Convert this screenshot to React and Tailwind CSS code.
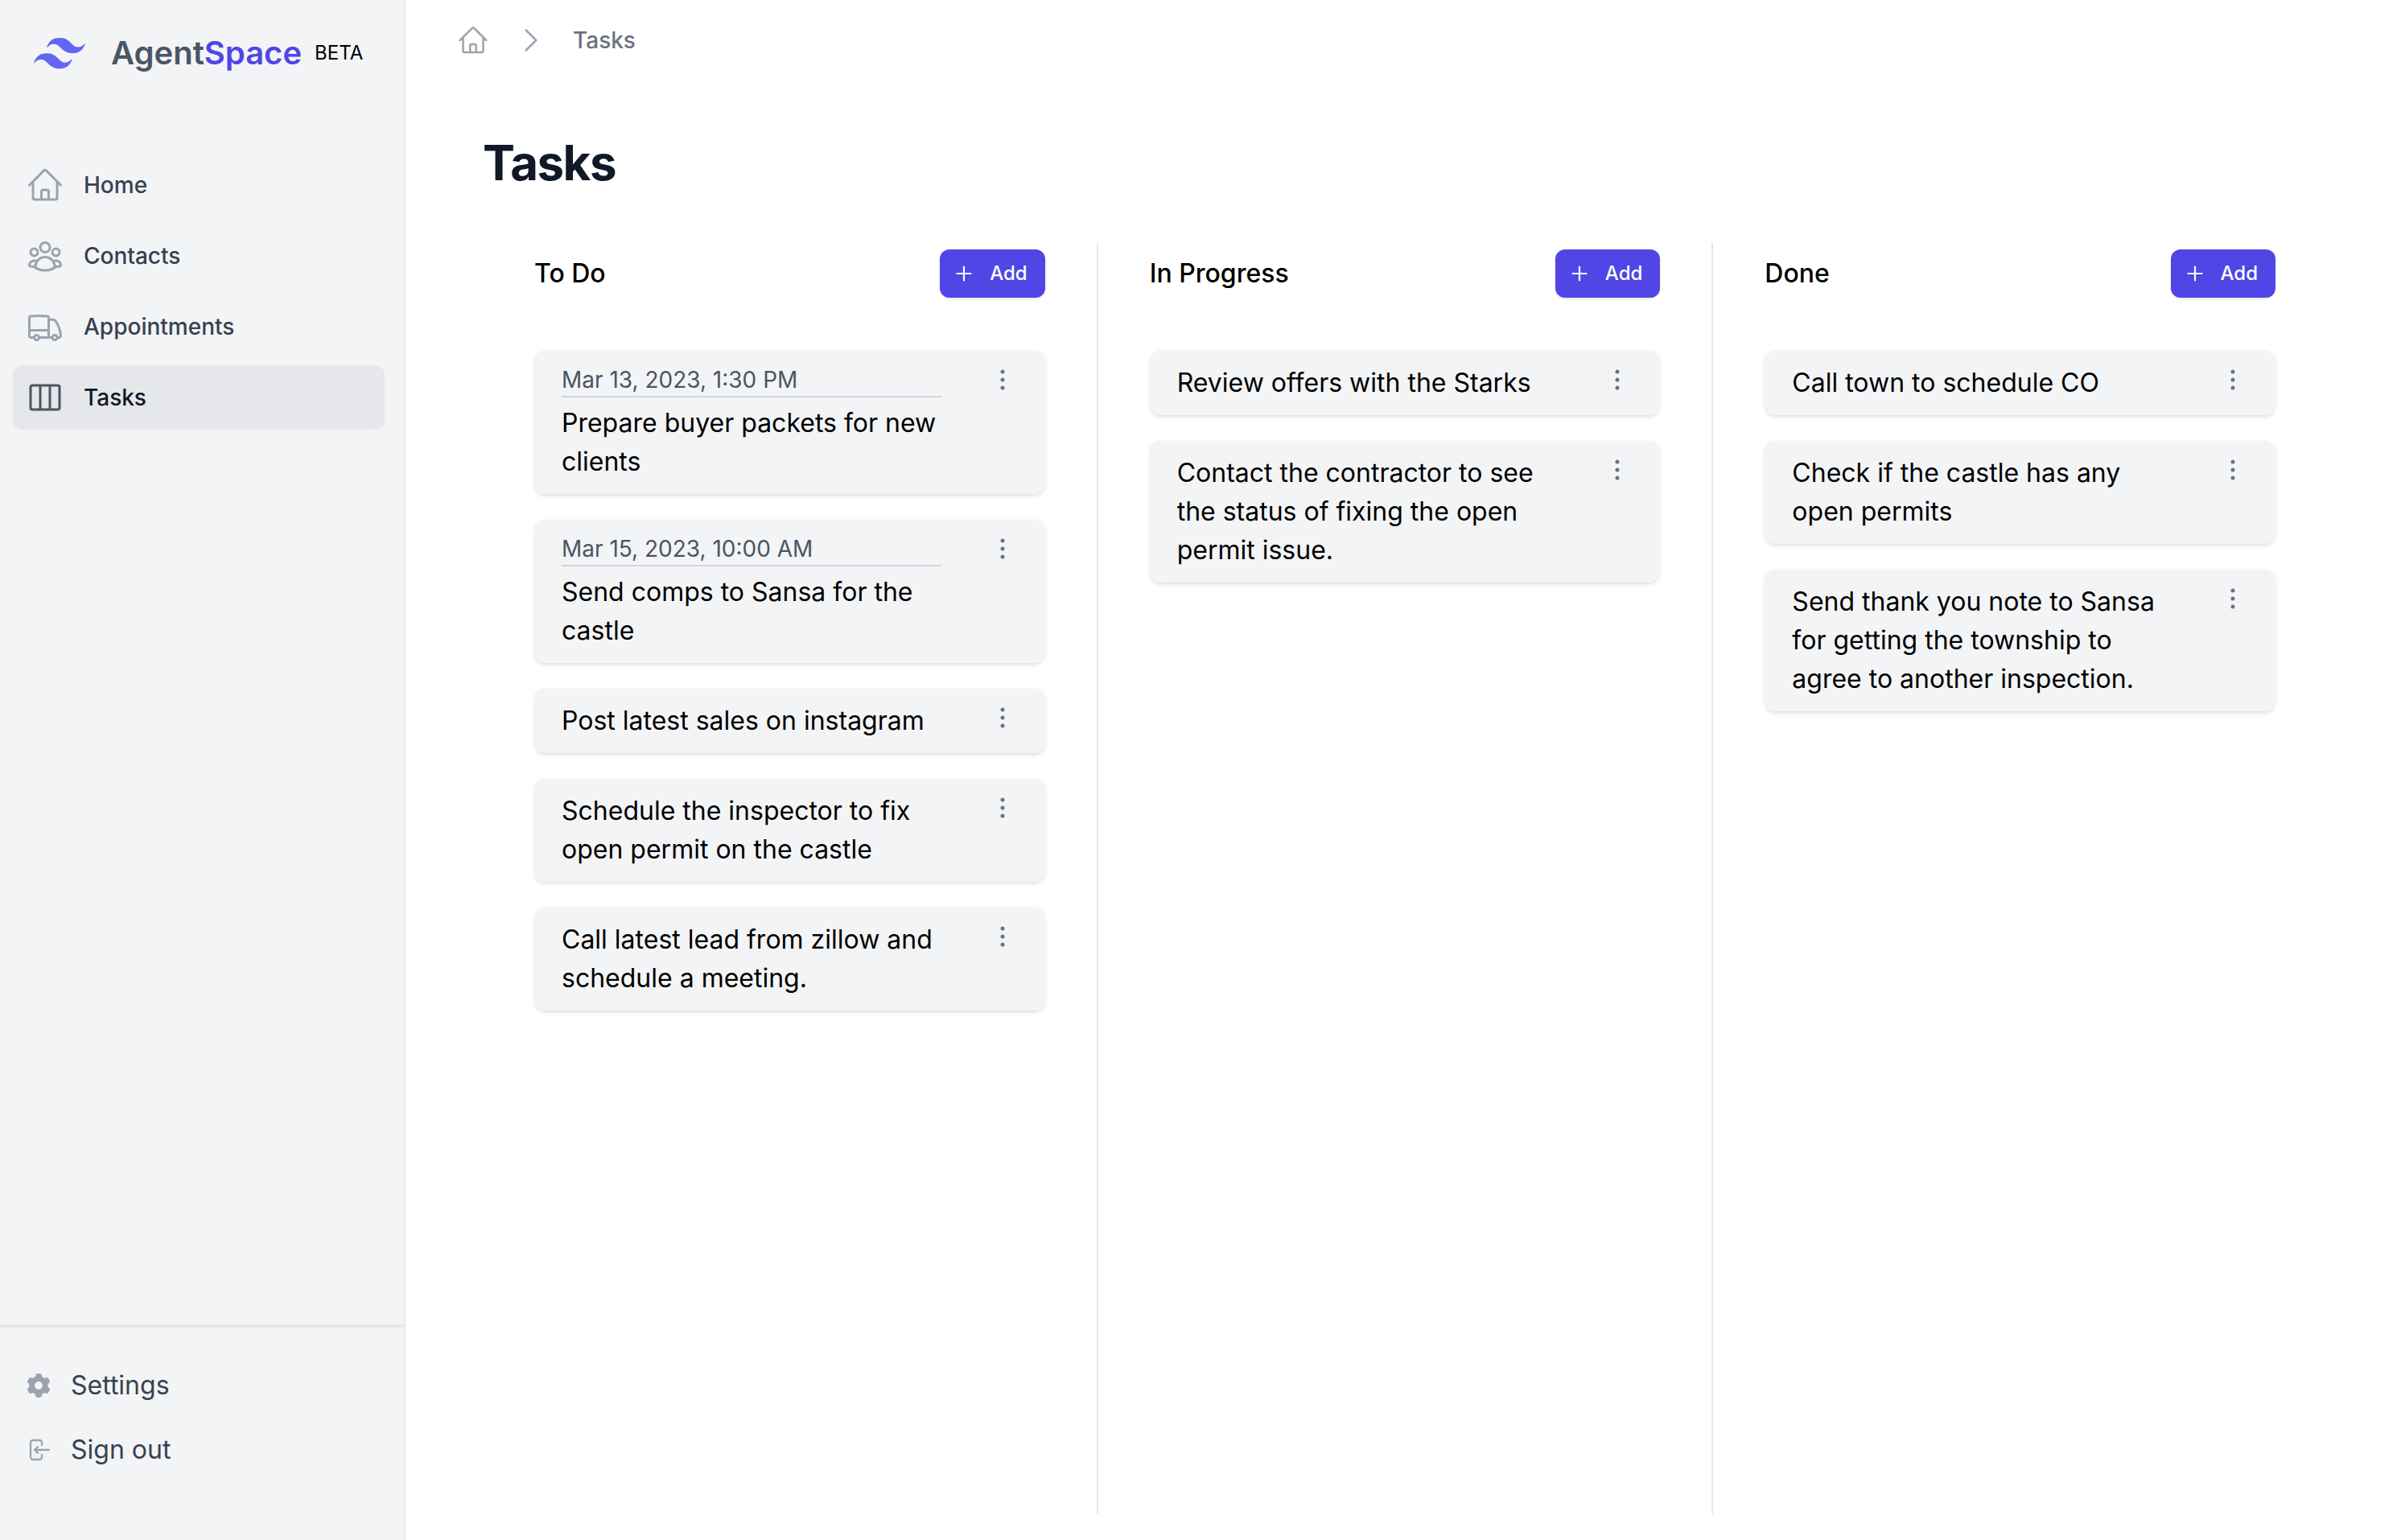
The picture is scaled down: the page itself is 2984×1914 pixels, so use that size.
import {
  HiOutlineHome,
  HiOutlineUserGroup,
  HiOutlineTruck,
  HiOutlineViewColumns,
  HiOutlineChevronRight,
} from "react-icons/hi2";

const NAV = [
  { name: "Home", icon: HiOutlineHome },
  { name: "Contacts", icon: HiOutlineUserGroup },
  { name: "Appointments", icon: HiOutlineTruck },
  { name: "Tasks", icon: HiOutlineViewColumns, current: true },
];

const COLUMNS = [
  {
    title: "To Do",
    tasks: [
      { date: "Mar 13, 2023, 1:30 PM", text: "Prepare buyer packets for new clients" },
      { date: "Mar 15, 2023, 10:00 AM", text: "Send comps to Sansa for the castle" },
      { text: "Post latest sales on instagram" },
      { text: "Schedule the inspector to fix open permit on the castle" },
      { text: "Call latest lead from zillow and schedule a meeting." },
    ],
  },
  {
    title: "In Progress",
    tasks: [
      { text: "Review offers with the Starks" },
      { text: "Contact the contractor to see the status of fixing the open permit issue." },
    ],
  },
  {
    title: "Done",
    tasks: [
      { text: "Call town to schedule CO" },
      { text: "Check if the castle has any open permits" },
      { text: "Send thank you note to Sansa for getting the township to agree to another inspection." },
    ],
  },
];

function Logo() {
  return (
    <svg className="h-16 w-16 shrink-0 text-[#6366f1]" viewBox="0 0 32 32" fill="currentColor" aria-hidden="true">
      <path d="M16 6.5c-4.27 0-6.93 2.13-8 6.4 1.6-2.13 3.47-2.93 5.6-2.4 1.22.3 2.09 1.19 3.05 2.17 1.57 1.59 3.38 3.43 7.35 3.43 4.27 0 6.93-2.13 8-6.4-1.6 2.13-3.47 2.93-5.6 2.4-1.22-.3-2.09-1.19-3.05-2.16C21.78 8.34 19.97 6.5 16 6.5zM8 16.1c-4.27 0-6.93 2.13-8 6.4 1.6-2.13 3.47-2.93 5.6-2.4 1.22.3 2.09 1.19 3.05 2.17 1.57 1.59 3.38 3.43 7.35 3.43 4.27 0 6.93-2.13 8-6.4-1.6 2.13-3.47 2.93-5.6 2.4-1.22-.3-2.09-1.19-3.05-2.17C13.78 17.94 11.97 16.1 8 16.1z" />
    </svg>
  );
}

const TEETH = [0, 60, 120, 180, 240, 300];

function GearIcon() {
  return (
    <svg className="h-8 w-8 shrink-0 text-[#9ca3af]" viewBox="0 0 32 32" fill="currentColor" aria-hidden="true">
      <circle cx="16" cy="16" r="8.3" fill="none" stroke="currentColor" strokeWidth="6.8" />
      {TEETH.map((angle) => (
        <rect key={angle} x="12.2" y="1.2" width="7.6" height="7" rx="2" transform={`rotate(${angle} 16 16)`} />
      ))}
    </svg>
  );
}

function SignOutIcon() {
  return (
    <svg className="h-8 w-8 shrink-0 text-[#9ca3af]" viewBox="0 0 32 32" fill="none" stroke="currentColor" strokeWidth="2.3" strokeLinecap="round" strokeLinejoin="round" aria-hidden="true">
      <path d="M20 10V7a3 3 0 0 0-3-3H9a3 3 0 0 0-3 3v18a3 3 0 0 0 3 3h8a3 3 0 0 0 3-3v-3M29 16H11M15 12.200l-4 3.800 4 3.800" />
    </svg>
  );
}

function TaskCard({ task }) {
  return (
    <li className="flex items-start justify-between rounded-xl bg-[#f3f4f6] py-4 pr-8 pl-[33px] shadow-[0_2px_6px_rgba(0,0,0,0.1),0_2px_4px_-2px_rgba(0,0,0,0.1)]">
      <div className="w-118 min-w-0">
        {task.date && (
          <p className="mb-2 border-b-2 border-[#d1d5db] text-[28px] leading-10 text-[#4b5563]">{task.date}</p>
        )}
        <p className="text-[32px] leading-12">{task.text}</p>
      </div>
      <button type="button" aria-label="Task options" className="flex h-10 w-10 shrink-0 items-center justify-center text-[#6b7280]">
        <svg className="h-10 w-10" viewBox="0 0 20 20" fill="currentColor" aria-hidden="true">
          <circle cx="10" cy="5" r="1.25" />
          <circle cx="10" cy="10" r="1.25" />
          <circle cx="10" cy="15" r="1.25" />
        </svg>
      </button>
    </li>
  );
}

function Column({ column }) {
  return (
    <section className="min-w-0 flex-1 px-16 pt-2">
      <header className="flex items-center justify-between">
        <h2 className="text-[32px] leading-12 font-medium">{column.title}</h2>
        <button type="button" className="flex h-15 items-center rounded-xl bg-[#4f46e5] pr-[22px] pl-4 text-[24px] leading-8 font-medium text-white shadow-sm">
          <svg className="mr-[18px] h-7 w-7" viewBox="0 0 28 28" fill="none" stroke="currentColor" strokeWidth="2.2" strokeLinecap="round" aria-hidden="true">
            <path d="M14 5.500v17M5.500 14h17" />
          </svg>
          Add
        </button>
      </header>
      <ul className="mt-[66px] flex flex-col gap-8 px-px">
        {column.tasks.map((task) => (
          <TaskCard key={task.text} task={task} />
        ))}
      </ul>
    </section>
  );
}

export default function App() {
  return (
    <div className="flex min-h-screen bg-white font-['Inter',sans-serif] text-black">
      <aside className="flex w-126 shrink-0 flex-col border-r-2 border-[#e5e7eb] bg-[#f3f4f6]">
        <div className="flex h-33 items-center pl-[42px]">
          <Logo />
          <p className="ml-8 text-[40px] leading-14 font-semibold text-[#4b5563]">
            Agent<span className="text-[#4f46e5]">Space</span>
          </p>
          <span className="ml-4 text-[24px] leading-8">BETA</span>
        </div>
        <nav className="mt-[58px] flex flex-col gap-2 pr-6 pl-4">
          {NAV.map(({ name, icon: Icon, current }) => (
            <a
              key={name}
              href="#"
              aria-current={current ? "page" : undefined}
              className={
                current
                  ? "flex h-20 items-center gap-6 rounded-xl bg-[#e5e7eb] px-4 text-[28px] leading-10 font-medium text-[#111827]"
                  : "flex h-20 items-center gap-6 rounded-xl px-4 text-[28px] leading-10 font-medium text-[#374151]"
              }
            >
              <Icon className={current ? "h-12 w-12 text-[#4b5563]" : "h-12 w-12 text-[#9ca3af]"} />
              {name}
            </a>
          ))}
        </nav>
        <div className="mt-auto flex flex-col border-t-4 border-[#e5e7eb] px-8 pt-8 pb-18 text-[32px] leading-12 text-[#374151]">
          <a href="#" className="flex h-20 items-center gap-6">
            <GearIcon />
            Settings
          </a>
          <a href="#" className="flex h-20 items-center gap-6">
            <SignOutIcon />
            Sign out
          </a>
        </div>
      </aside>
      <main className="flex min-w-0 flex-1 flex-col">
        <nav aria-label="Breadcrumb" className="flex h-25 items-center pl-16">
          <a href="#" aria-label="Home" className="text-[#9ca3af]">
            <HiOutlineHome className="h-10 w-10" />
          </a>
          <HiOutlineChevronRight className="ml-8 h-10 w-10 text-[#9ca3af]" />
          <a href="#" aria-current="page" className="ml-8 text-[28px] leading-10 font-medium text-[#6b7280]">
            Tasks
          </a>
        </nav>
        <h1 className="mt-[66px] ml-24 text-[60px] leading-18 font-bold tracking-tight text-[#111827]">Tasks</h1>
        <div className="mt-16 mr-23 mb-8 ml-24 flex flex-1 divide-x-2 divide-[#e5e7eb]">
          {COLUMNS.map((column) => (
            <Column key={column.title} column={column} />
          ))}
        </div>
      </main>
    </div>
  );
}
